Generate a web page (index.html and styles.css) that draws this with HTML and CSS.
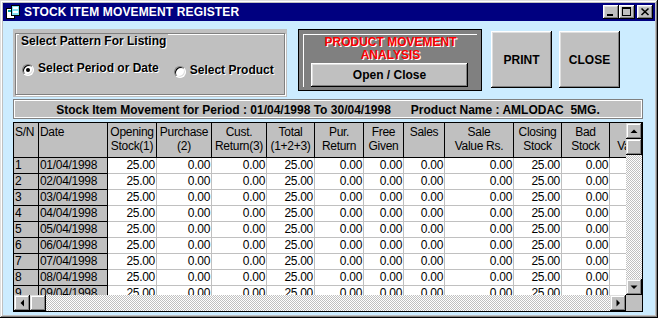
FILE: index.html
```html
<!DOCTYPE html>
<html lang="en">
<head>
    <meta charset="UTF-8">
    <title>Stock Item Movement Register</title>
    <link rel="stylesheet" href="styles.css">
</head>
<body>
<div class="window">
    <div class="titlebar">
        <svg class="app-icon" viewBox="0 0 16 16">
            <rect x="1.5" y="4.5" width="8" height="10" fill="#fff" stroke="#000"/>
            <rect x="3" y="6" width="5" height="2" fill="#00a0a0"/>
            <rect x="6.5" y="1.5" width="8" height="10" fill="#80e0f0" stroke="#000"/>
            <rect x="8" y="3" width="5" height="2" fill="#fff"/>
            <rect x="8" y="7" width="5" height="2" fill="#fff"/>
        </svg>
        <span class="title">STOCK ITEM MOVEMENT REGISTER</span>
        <div class="caption-btns">
            <span class="cbtn"><svg viewBox="0 0 16 14"><rect x="4" y="9" width="6" height="2"/></svg></span>
            <span class="cbtn"><svg viewBox="0 0 16 14"><path d="M3 2h9v9H3z M4 4v6h7V4z" fill-rule="evenodd"/></svg></span>
            <span class="cbtn gap"><svg viewBox="0 0 16 14"><path d="M4.5 3.5l7 6.5M11.5 3.5l-7 6.5" stroke="#000" stroke-width="1.6"/></svg></span>
        </div>
    </div>
    <div class="client">
        <div class="top">
            <div class="group">
                <div class="frame">
                    <span class="frame-title">Select Pattern For Listing</span>
                    <div class="radios">
                        <label class="opt"><span class="radio"><span class="dot"></span></span>Select Period or Date</label>
                        <label class="opt second"><span class="radio"></span>Select Product</label>
                    </div>
                </div>
            </div>
            <div class="analysis">
                <div class="analysis-inner">
                    <div class="analysis-title">PRODUCT MOVEMENT<br>ANALYSIS</div>
                    <div class="btn open">Open / Close</div>
                </div>
            </div>
            <div class="btn big print">PRINT</div>
            <div class="btn big">CLOSE</div>
        </div>

        <div class="period">Stock Item Movement for Period : 01/04/1998 To 30/04/1998      Product Name : AMLODAC  5MG.</div>

        <div class="grid">
            <div class="grid-view">
                <div class="row head">
                    <div class="c fix">S/N</div><div class="c fix">Date</div>
                    <div class="c">Opening Stock(1)</div><div class="c">Purchase<br>(2)</div>
                    <div class="c">Cust.<br>Return(3)</div><div class="c">Total<br>(1+2+3)</div>
                    <div class="c">Pur.<br>Return</div><div class="c">Free<br>Given</div>
                    <div class="c">Sales</div><div class="c">Sale<br>Value Rs.</div>
                    <div class="c">Closing<br>Stock</div><div class="c">Bad<br>Stock</div>
                    <div class="c">Stock<br>Value Rs.</div>
                </div>
                <div class="row">
                    <div class="c fix">1</div><div class="c fix">01/04/1998</div>
                    <div class="c">25.00</div><div class="c">0.00</div><div class="c">0.00</div><div class="c">25.00</div>
                    <div class="c">0.00</div><div class="c">0.00</div><div class="c">0.00</div><div class="c">0.00</div>
                    <div class="c">25.00</div><div class="c">0.00</div><div class="c"></div>
                </div>
                <div class="row">
                    <div class="c fix">2</div><div class="c fix">02/04/1998</div>
                    <div class="c">25.00</div><div class="c">0.00</div><div class="c">0.00</div><div class="c">25.00</div>
                    <div class="c">0.00</div><div class="c">0.00</div><div class="c">0.00</div><div class="c">0.00</div>
                    <div class="c">25.00</div><div class="c">0.00</div><div class="c"></div>
                </div>
                <div class="row">
                    <div class="c fix">3</div><div class="c fix">03/04/1998</div>
                    <div class="c">25.00</div><div class="c">0.00</div><div class="c">0.00</div><div class="c">25.00</div>
                    <div class="c">0.00</div><div class="c">0.00</div><div class="c">0.00</div><div class="c">0.00</div>
                    <div class="c">25.00</div><div class="c">0.00</div><div class="c"></div>
                </div>
                <div class="row">
                    <div class="c fix">4</div><div class="c fix">04/04/1998</div>
                    <div class="c">25.00</div><div class="c">0.00</div><div class="c">0.00</div><div class="c">25.00</div>
                    <div class="c">0.00</div><div class="c">0.00</div><div class="c">0.00</div><div class="c">0.00</div>
                    <div class="c">25.00</div><div class="c">0.00</div><div class="c"></div>
                </div>
                <div class="row">
                    <div class="c fix">5</div><div class="c fix">05/04/1998</div>
                    <div class="c">25.00</div><div class="c">0.00</div><div class="c">0.00</div><div class="c">25.00</div>
                    <div class="c">0.00</div><div class="c">0.00</div><div class="c">0.00</div><div class="c">0.00</div>
                    <div class="c">25.00</div><div class="c">0.00</div><div class="c"></div>
                </div>
                <div class="row">
                    <div class="c fix">6</div><div class="c fix">06/04/1998</div>
                    <div class="c">25.00</div><div class="c">0.00</div><div class="c">0.00</div><div class="c">25.00</div>
                    <div class="c">0.00</div><div class="c">0.00</div><div class="c">0.00</div><div class="c">0.00</div>
                    <div class="c">25.00</div><div class="c">0.00</div><div class="c"></div>
                </div>
                <div class="row">
                    <div class="c fix">7</div><div class="c fix">07/04/1998</div>
                    <div class="c">25.00</div><div class="c">0.00</div><div class="c">0.00</div><div class="c">25.00</div>
                    <div class="c">0.00</div><div class="c">0.00</div><div class="c">0.00</div><div class="c">0.00</div>
                    <div class="c">25.00</div><div class="c">0.00</div><div class="c"></div>
                </div>
                <div class="row">
                    <div class="c fix">8</div><div class="c fix">08/04/1998</div>
                    <div class="c">25.00</div><div class="c">0.00</div><div class="c">0.00</div><div class="c">25.00</div>
                    <div class="c">0.00</div><div class="c">0.00</div><div class="c">0.00</div><div class="c">0.00</div>
                    <div class="c">25.00</div><div class="c">0.00</div><div class="c"></div>
                </div>
                <div class="row">
                    <div class="c fix">9</div><div class="c fix">09/04/1998</div>
                    <div class="c">25.00</div><div class="c">0.00</div><div class="c">0.00</div><div class="c">25.00</div>
                    <div class="c">0.00</div><div class="c">0.00</div><div class="c">0.00</div><div class="c">0.00</div>
                    <div class="c">25.00</div><div class="c">0.00</div><div class="c"></div>
                </div>
            </div>

            <div class="vscroll">
                <span class="sbtn"><svg viewBox="0 0 16 16"><polygon points="4.5,10 8,6.5 11.5,10"/></svg></span>
                <span class="sbtn"></span>
                <span class="track"></span>
                <span class="sbtn"><svg viewBox="0 0 16 16"><polygon points="4.5,6.5 8,10 11.5,6.5"/></svg></span>
            </div>
            <div class="hscroll">
                <span class="sbtn"><svg viewBox="0 0 16 16"><polygon points="10,4.5 6.5,8 10,11.5"/></svg></span>
                <span class="sbtn"></span>
                <span class="track"></span>
                <span class="sbtn"><svg viewBox="0 0 16 16"><polygon points="6.5,4.5 10,8 6.5,11.5"/></svg></span>
            </div>
            <div class="corner"></div>
        </div>
    </div>
</div>
</body>
</html>
```

FILE: styles.css
```css
* {
    margin: 0;
    padding: 0;
    box-sizing: border-box;
}

body {
    font-family: "Liberation Sans", Arial, sans-serif;
    font-size: 12px;
    background: #c0c0c0;
}

/* window frame */
.window {
    display: flex;
    flex-direction: column;
    width: 658px;
    height: 318px;
    padding: 3px;
    background: #c0c0c0;
    box-shadow: inset -1px -1px #000, inset 1px 1px #dfdfdf, inset -2px -2px #808080, inset 2px 2px #fff;
}
.titlebar {
    display: flex;
    align-items: center;
    height: 18px;
    padding: 0 2px;
    background: #000080;
    color: #fff;
}
.app-icon {
    width: 16px;
    height: 16px;
    margin-right: 3px;
}
.title {
    font-weight: bold;
    letter-spacing: 0.15px;
}
.caption-btns {
    display: flex;
    margin-left: auto;
}
.cbtn {
    width: 16px;
    height: 14px;
    background: #c0c0c0;
    box-shadow: inset -1px -1px #000, inset 1px 1px #fff, inset -2px -2px #808080, inset 2px 2px #dfdfdf;
}
.cbtn svg {
    display: block;
    width: 16px;
    height: 14px;
}
.cbtn.gap {
    margin-left: 2px;
}

.client {
    flex: 1;
    padding: 8px 0 0 10px;
    background: #ccecff;
}

/* top row */
.top {
    display: flex;
    align-items: flex-start;
}
.group {
    width: 274px;
    height: 68px;
    padding: 4px 2px 2px 2px;
    background: #c0c0c0;
}
.frame {
    height: 100%;
    border: 1px solid #808080;
    box-shadow: 1px 1px #fff, inset 1px 1px #fff;
}
.frame-title {
    display: inline-block;
    margin: -4px 0 0 3px;
    padding: 0 2px;
    background: #c0c0c0;
    font-weight: bold;
    line-height: 14px;
    text-shadow: 1px 1px #fff;
}
.radios {
    display: flex;
    margin-top: 13px;
    padding-left: 6px;
}
.opt {
    display: flex;
    align-items: flex-start;
    font-weight: bold;
    line-height: 14px;
    text-shadow: 1px 1px #fff;
}
.opt.second {
    margin: 2px 0 0 15px;
}
.radio {
    display: flex;
    align-items: center;
    justify-content: center;
    width: 12px;
    height: 12px;
    margin: 3px 4px 0 0;
    border: 1px solid;
    border-color: #808080 #fff #fff #808080;
    border-radius: 50%;
    background: #fff;
    box-shadow: inset 1px 1px #000, inset -1px -1px #dfdfdf;
}
.dot {
    width: 4px;
    height: 4px;
    border-radius: 50%;
    background: #000;
}

.btn {
    display: flex;
    align-items: center;
    justify-content: center;
    background: #c0c0c0;
    font-weight: bold;
    box-shadow: inset -1px -1px #000, inset 1px 1px #fff, inset -2px -2px #808080, inset 2px 2px #dfdfdf;
}
.analysis {
    width: 184px;
    margin-left: 11px;
    padding: 4px 4px 3px 4px;
    border: 1px solid #000;
    background: #808080;
}
.analysis-inner {
    border-top: 1px solid #fff;
    border-left: 1px solid #fff;
}
.analysis-title {
    padding-top: 1px;
    color: #f00;
    font-weight: bold;
    line-height: 13px;
    text-align: center;
    text-shadow: 1px 1px #fff;
}
.btn.open {
    width: 157px;
    height: 24px;
    margin: 1px 0 0 7px;
}
.btn.big {
    width: 61px;
    height: 57px;
    margin: 2px 0 0 7px;
}
.btn.print {
    margin-left: 9px;
}

/* period caption */
.period {
    width: 630px;
    height: 20px;
    margin-top: 2px;
    padding-top: 2px;
    border: 1px solid #808080;
    background: #c0c0c0;
    box-shadow: inset 0 0 0 1px #fff;
    font-weight: bold;
    line-height: 16px;
    text-align: center;
    white-space: pre;
}

/* grid */
.grid {
    display: grid;
    grid-template-columns: 612px 16px;
    grid-template-rows: 172px 16px;
    width: 630px;
    height: 190px;
    margin-top: 3px;
    border: 1px solid #000;
    background: #fff;
}
.grid-view {
    overflow: hidden;
}
.row {
    display: grid;
    grid-template-columns: 25px 69px 49px 55px 55px 48px 49px 40px 41px 69px 48px 48px 64px;
    height: 16px;
}
.c {
    overflow: hidden;
    padding: 0 1px;
    border-right: 1px solid #c0c0c0;
    border-bottom: 1px solid #c0c0c0;
    line-height: 15px;
    letter-spacing: -0.3px;
    text-align: right;
    white-space: nowrap;
}
.c.fix {
    border-color: #000;
    background: #c0c0c0;
    text-align: left;
}
.row.head {
    height: 35px;
}
.row.head .c {
    padding-top: 2px;
    border-color: #000;
    background: #c0c0c0;
    line-height: 14px;
    text-align: center;
    white-space: normal;
}
.row.head .c.fix {
    text-align: left;
}

.vscroll,
.hscroll {
    display: flex;
}
.vscroll {
    flex-direction: column;
}
.sbtn {
    flex: none;
    width: 16px;
    height: 16px;
    background: #c0c0c0;
    box-shadow: inset -1px -1px #000, inset 1px 1px #dfdfdf, inset -2px -2px #808080, inset 2px 2px #fff;
}
.sbtn svg {
    display: block;
    width: 16px;
    height: 16px;
}
.track {
    flex: 1;
    background: repeating-conic-gradient(#c0c0c0 0 25%, #fff 0 50%) 0 0 / 2px 2px;
}
.corner {
    background: #c0c0c0;
}
```
